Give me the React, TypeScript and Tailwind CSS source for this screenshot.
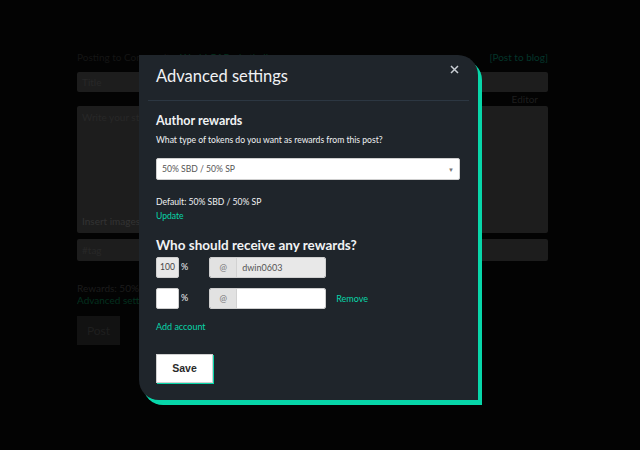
import React from 'react';

const green = '#07d6a9';

const Backdrop: React.FC = () => (
    <div className="ml-[77px] w-[471px] pt-[51px] font-['Lato',sans-serif] text-[10px] text-[#151515]">
        <div className="flex justify-between leading-[12px]">
            <span>
                Posting to Community: <span className="text-[#03321f]">World Of Basketball</span>
            </span>
            <span className="text-[#04352a]">[Post to blog]</span>
        </div>
        <div className="mt-[9px] h-[20px] bg-[#1d1d1d] rounded-[2px] px-[5px] leading-[20px] text-[#282828]">Title</div>
        <div className="h-[14px] leading-[14px] text-right pr-[10px] text-[#1e1e1e]">Editor</div>
        <div className="h-[127px] bg-[#1d1d1d] rounded-[2px] flex flex-col justify-between px-[5px] py-[4px] text-[#282828]">
            <span>Write your story...</span>
            <span className="w-[62px] overflow-hidden whitespace-nowrap text-[#333]">Insert images by dragging</span>
        </div>
        <div className="mt-[6px] h-[22px] bg-[#1d1d1d] rounded-[2px] px-[5px] leading-[22px] text-[#282828]">#tag</div>
        <div className="mt-[21px] w-[66px] overflow-hidden whitespace-nowrap leading-[12px] text-[#1c1c1c]">Rewards: 50% SBD / 50% SP</div>
        <div className="w-[66px] overflow-hidden whitespace-nowrap leading-[12px] text-[#03301f]">Advanced settings</div>
        <div className="mt-[10px] w-[43px] h-[29px] bg-[#121212] flex items-center justify-center text-[12px] text-[#1f1f1f]">Post</div>
    </div>
);

const Modal: React.FC = () => (
    <div
        className="absolute left-[139px] top-[55px] w-[339px] h-[345px] bg-[#1f252b] rounded-tr-[20px] rounded-bl-[20px] font-['Lato',sans-serif] text-[#f0f2f4]"
        style={{ boxShadow: `4px 5px 0 ${green}` }}
    >
        {/* header */}
        <div className="mx-[9px] h-[46px] border-b border-[#2c3742] pl-[8px] pt-[7px]">
            <h2 className="text-[16.5px] leading-[28px]">Advanced settings</h2>
        </div>
        <button className="absolute right-[19px] top-[10px] text-[#c9ced4]">
            <svg width="9" height="9" viewBox="0 0 9 9">
                <path d="M1 1L8 8M8 1L1 8" stroke="currentColor" strokeWidth="1.5" />
            </svg>
        </button>

        <div className="px-[17px]">
            <h3 className="mt-[11px] text-[12.5px] font-bold leading-[18px]">Author rewards</h3>
            <p className="mt-[4px] text-[8.6px] leading-[12px]">What type of tokens do you want as rewards from this post?</p>
            <div className="mt-[12px] w-[304px] h-[22px] bg-white rounded-[2px] border border-[#cfcfcf] flex items-center justify-between px-[5px] text-[8.6px] text-[#555]">
                <span>50% SBD / 50% SP</span>
                <span className="text-[#777] text-[6px]">▼</span>
            </div>
            <p className="mt-[16px] text-[8.6px] leading-[12px]">Default: 50% SBD / 50% SP</p>
            <p className="mt-[2px] text-[8.6px] leading-[12px] text-[#07d6a9]">Update</p>

            <h3 className="mt-[14px] text-[13.5px] font-bold leading-[18px]">Who should receive any rewards?</h3>

            <div className="mt-[3px] flex items-center h-[21px]">
                <div className="w-[23px] h-[21px] bg-[#e8e8e8] border border-[#cfcfcf] rounded-[2px] flex items-center justify-center text-[8.5px] text-[#444]">100</div>
                <span className="ml-[2px] self-start mt-[3px] text-[9px]">%</span>
                <div className="ml-[21px] w-[117px] h-[21px] flex border border-[#cfcfcf] rounded-[2px] overflow-hidden">
                    <div className="w-[27px] bg-[#e2e2e2] border-r border-[#d2d2d2] flex items-center justify-center text-[9px] text-[#777]">@</div>
                    <div className="flex-1 bg-[#e8e8e8] flex items-center px-[5px] text-[9px] text-[#555]">dwin0603</div>
                </div>
            </div>

            <div className="mt-[10px] flex items-center h-[21px]">
                <div className="w-[23px] h-[21px] bg-white border border-[#cfcfcf] rounded-[2px]"></div>
                <span className="ml-[2px] self-start mt-[3px] text-[9px]">%</span>
                <div className="ml-[21px] w-[117px] h-[21px] flex border border-[#cfcfcf] rounded-[2px] overflow-hidden">
                    <div className="w-[27px] bg-[#e2e2e2] border-r border-[#d2d2d2] flex items-center justify-center text-[9px] text-[#777]">@</div>
                    <div className="flex-1 bg-white"></div>
                </div>
                <span className="ml-[10px] text-[9px] text-[#07d6a9]">Remove</span>
            </div>

            <p className="mt-[12px] text-[9px] leading-[12px] text-[#07d6a9]">Add account</p>

            <button
                className="mt-[21px] w-[57px] h-[29px] bg-white border border-[#d0d0d0] font-['Liberation_Sans',sans-serif] font-bold text-[10.5px] text-[#2a2a2a]"
                style={{ boxShadow: `1px 1px 0 ${green}` }}
            >
                Save
            </button>
        </div>
    </div>
);

const App: React.FC = () => {
    return (
        <div className="relative w-[640px] h-[450px] bg-[#030303] overflow-hidden">
            <Backdrop />
            <Modal />
        </div>
    );
};

export default App;
